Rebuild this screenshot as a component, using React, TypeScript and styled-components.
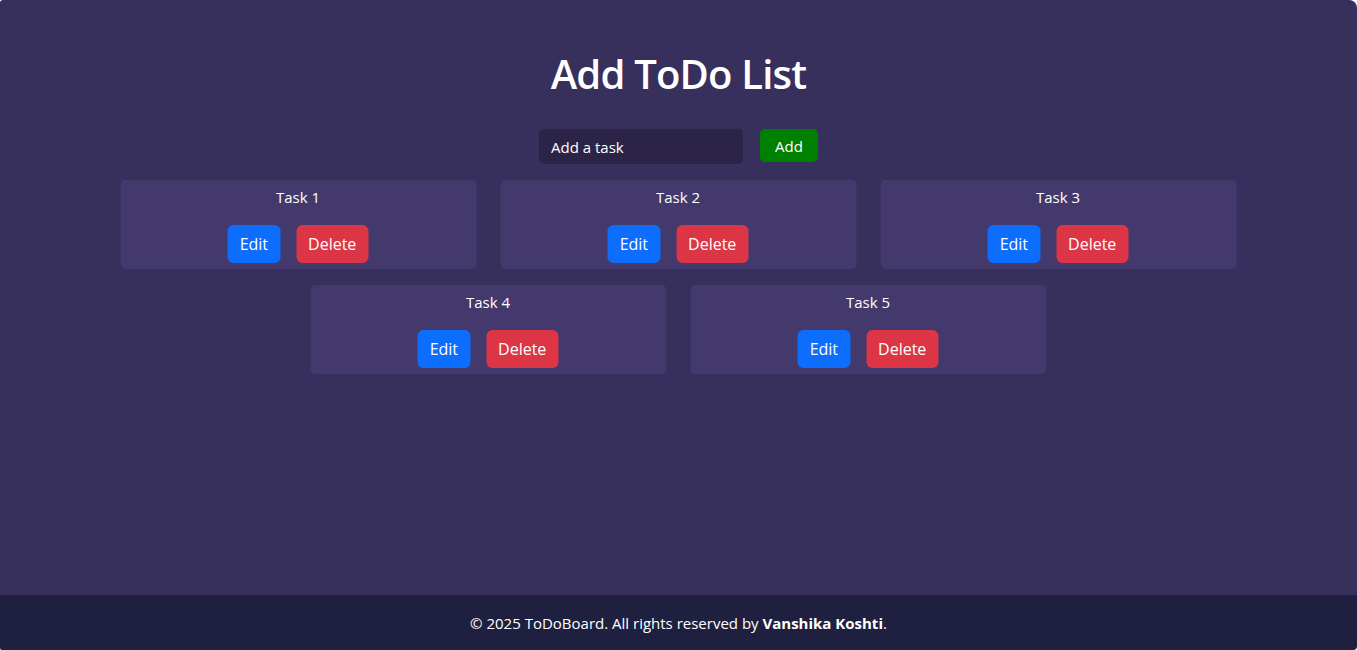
import React, { useState } from "react";
import styled, { createGlobalStyle } from "styled-components";

const GlobalStyle = createGlobalStyle`
  html, body {
    margin: 0;
    padding: 0;
    background: #ffffff;
  }
  body {
    font-family: "Open Sans", "Noto Sans", "Liberation Sans", sans-serif;
  }
  * {
    box-sizing: border-box;
  }
`;

const Shell = styled.div`
  min-height: 100vh;
  display: flex;
  flex-direction: column;
  border-radius: 3px 8px 4px 2px;
  overflow: hidden;
  color: #ffffff;
`;

const Main = styled.main`
  flex: 1;
  background: #372f5c;
  padding-top: 50px;
`;

const Title = styled.h1`
  margin: 0 0 31px;
  text-align: center;
  font-size: 40px;
  line-height: 48px;
  font-weight: 600;
  letter-spacing: -0.8px;
`;

const AddForm = styled.form`
  display: flex;
  justify-content: center;
  align-items: flex-start;
  gap: 17px;
`;

const TaskInput = styled.input`
  width: 204px;
  height: 35px;
  padding: 0 12px;
  border: none;
  border-radius: 5px;
  background: #2b2447;
  color: #ffffff;
  font-family: inherit;
  font-size: 15px;
  outline: none;
  &::placeholder {
    color: #ffffff;
  }
`;

const AddButton = styled.button`
  height: 33px;
  width: 58px;
  border: none;
  border-radius: 5px;
  background: #008000;
  color: #ffffff;
  font-family: inherit;
  font-size: 15px;
  cursor: pointer;
`;

const Board = styled.div`
  display: flex;
  flex-wrap: wrap;
  justify-content: center;
  column-gap: 24px;
  row-gap: 16px;
  width: 1116px;
  margin: 16px auto 0;
  transform: translateX(-0.5px);
`;

const Card = styled.div`
  width: 356px;
  padding: 6px 10px;
  border-radius: 5px;
  background: #43396c;
  text-align: center;
`;

const TaskName = styled.p`
  margin: 0 0 17px;
  font-size: 15px;
  line-height: 22px;
`;

const Actions = styled.div`
  display: flex;
  justify-content: center;
  gap: 16px;
`;

const ActionButton = styled.button<{ $tone: "edit" | "delete" }>`
  height: 38px;
  padding: 0 12px;
  border: none;
  border-radius: 6px;
  background: ${(p) => (p.$tone === "edit" ? "#0d6efd" : "#dc3545")};
  color: #ffffff;
  font-family: inherit;
  font-size: 16px;
  cursor: pointer;
`;

const Footer = styled.footer`
  height: 55px;
  display: flex;
  align-items: center;
  justify-content: center;
  background: #1f1f3f;
  font-size: 15px;
  padding-top: 1px;
`;

export default function App() {
  const [tasks, setTasks] = useState<string[]>([
    "Task 1",
    "Task 2",
    "Task 3",
    "Task 4",
    "Task 5",
  ]);
  const [text, setText] = useState("");

  const addTask = (e: React.FormEvent) => {
    e.preventDefault();
    if (!text.trim()) return;
    setTasks([...tasks, text.trim()]);
    setText("");
  };

  return (
    <>
      <GlobalStyle />
      <Shell>
        <Main>
          <Title>Add ToDo List</Title>
          <AddForm onSubmit={addTask}>
            <TaskInput
              placeholder="Add a task"
              value={text}
              onChange={(e) => setText(e.target.value)}
            />
            <AddButton type="submit">Add</AddButton>
          </AddForm>
          <Board>
            {tasks.map((task, i) => (
              <Card key={i}>
                <TaskName>{task}</TaskName>
                <Actions>
                  <ActionButton $tone="edit">Edit</ActionButton>
                  <ActionButton
                    $tone="delete"
                    onClick={() => setTasks(tasks.filter((_, j) => j !== i))}
                  >
                    Delete
                  </ActionButton>
                </Actions>
              </Card>
            ))}
          </Board>
        </Main>
        <Footer>
          <span>
            © 2025 ToDoBoard. All rights reserved by <b>Vanshika Koshti</b>.
          </span>
        </Footer>
      </Shell>
    </>
  );
}
